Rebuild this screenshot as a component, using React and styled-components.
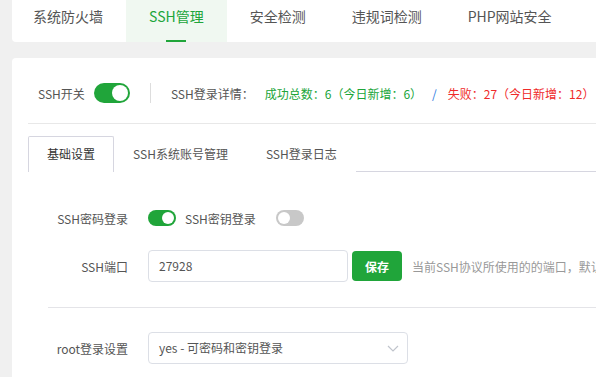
import React from 'react'
import styled, { createGlobalStyle } from 'styled-components'

const GlobalStyle = createGlobalStyle`
  html, body {
    margin: 0;
    padding: 0;
    overflow: hidden;
    background: #f0f0f0;
  }
  body {
    font-family: "Noto Sans CJK SC", "Noto Sans", "Liberation Sans", sans-serif;
    font-size: 12px;
    color: #555;
  }
`

const green = '#20a53a'

const Page = styled.div`
  width: 640px;
  height: 377px;
  padding-left: 12px;
  overflow: hidden;
`

const TopCard = styled.div`
  background: #fff;
  border-radius: 0 0 4px 4px;
  height: 42px;
  display: flex;
`

const TopTab = styled.div`
  position: relative;
  height: 42px;
  line-height: 32px;
  padding: 0 23px;
  font-size: 14px;
  color: ${p => (p.$active ? green : '#555')};
  background: ${p => (p.$active ? '#f0f8f1' : 'transparent')};
  white-space: nowrap;

  &:first-child {
    padding-left: 21px;
  }

  &::after {
    content: '';
    display: ${p => (p.$active ? 'block' : 'none')};
    position: absolute;
    left: 50%;
    bottom: 0;
    width: 20px;
    height: 2px;
    margin-left: -10px;
    background: ${green};
  }
`

const MainCard = styled.div`
  margin-top: 16px;
  background: #fff;
  border-radius: 4px;
  padding: 16px;
  height: 400px;
`

const StatusRow = styled.div`
  display: flex;
  align-items: center;
  height: 38px;
  padding: 0 10px 11px;
  border-bottom: 1px solid #e8e8e8;
  white-space: nowrap;
`

const Label = styled.span`
  color: #555;
  margin-left: ${p => p.$ml || 0}px;
`

const Switch = styled.span`
  position: relative;
  display: inline-block;
  flex: none;
  width: ${p => (p.$big ? 36 : 28)}px;
  height: ${p => (p.$big ? 20 : 16)}px;
  border-radius: 10px;
  background: ${p => (p.$on ? green : '#c8c8c8')};
  margin-left: ${p => p.$ml || 0}px;

  &::after {
    content: '';
    position: absolute;
    top: 2px;
    left: ${p => (p.$on ? 'auto' : '2px')};
    right: ${p => (p.$on ? '2px' : 'auto')};
    width: ${p => (p.$big ? 16 : 12)}px;
    height: ${p => (p.$big ? 16 : 12)}px;
    border-radius: 50%;
    background: #fff;
  }
`

const VLine = styled.span`
  width: 1px;
  height: 20px;
  background: #ddd;
  margin: 0 20px;
`

const Stat = styled.span`
  color: ${p => p.$color};
  margin-left: ${p => p.$ml || 0}px;
`

const Slash = styled.span`
  color: #2b7ae0;
  margin: 0 11px 0 10px;
`

const SubTabs = styled.div`
  display: flex;
  margin-top: 12px;
  height: 35px;
  border-bottom: 1px solid #d6d6e0;
`

const SubTab = styled.div`
  box-sizing: border-box;
  height: 36px;
  line-height: 34px;
  padding: 0 18px;
  color: ${p => (p.$active ? '#333' : '#555')};
  background: #fff;
  border: 1px solid ${p => (p.$active ? '#d6d6e0' : 'transparent')};
  border-bottom: none;
  border-radius: 2px 2px 0 0;
  white-space: nowrap;
`

const Form = styled.div`
  padding: 30px 0 0 20px;
`

const Row = styled.div`
  display: flex;
  align-items: center;
  height: 32px;
  margin-bottom: 16px;
  white-space: nowrap;
`

const RowLabel = styled.div`
  width: 80px;
  padding-right: 20px;
  text-align: right;
  color: #555;
`

const Input = styled.div`
  box-sizing: border-box;
  width: ${p => p.$w}px;
  height: 32px;
  border: 1px solid #dcdfe6;
  border-radius: 4px;
  padding: 0 10px;
  line-height: 30px;
  color: #555;
  position: relative;
`

const Button = styled.button`
  width: 50px;
  height: 30px;
  margin-left: 4px;
  border: none;
  border-radius: 4px;
  background: ${green};
  color: #fff;
  font-family: inherit;
  font-size: 12px;
  font-weight: bold;
`

const Hint = styled.span`
  margin-left: 10px;
  color: #999;
`

const Divider = styled.div`
  border-top: 1px solid #e4e4e8;
  margin: 25px 0 24px;
`

const Chevron = styled.svg`
  position: absolute;
  right: 8px;
  top: 12px;
`

export default function App() {
  return (
    <Page>
      <GlobalStyle />
      <TopCard>
        <TopTab>系统防火墙</TopTab>
        <TopTab $active>SSH管理</TopTab>
        <TopTab>安全检测</TopTab>
        <TopTab>违规词检测</TopTab>
        <TopTab>PHP网站安全</TopTab>
      </TopCard>
      <MainCard>
        <StatusRow>
          <Label>SSH开关</Label>
          <Switch $big $on $ml={9} />
          <VLine />
          <Label>SSH登录详情：</Label>
          <Stat $color={green} $ml={11}>成功总数：6（今日新增：6）</Stat>
          <Slash>/</Slash>
          <Stat $color="#ef2a2a">失败：27（今日新增：12）</Stat>
        </StatusRow>
        <SubTabs>
          <SubTab $active>基础设置</SubTab>
          <SubTab>SSH系统账号管理</SubTab>
          <SubTab>SSH登录日志</SubTab>
        </SubTabs>
        <Form>
          <Row>
            <RowLabel>SSH密码登录</RowLabel>
            <Switch $on />
            <Label $ml={9}>SSH密钥登录</Label>
            <Switch $ml={20} />
          </Row>
          <Row>
            <RowLabel>SSH端口</RowLabel>
            <Input $w={200}>27928</Input>
            <Button>保存</Button>
            <Hint>当前SSH协议所使用的的端口，默认为22</Hint>
          </Row>
          <Divider />
          <Row>
            <RowLabel>root登录设置</RowLabel>
            <Input $w={260}>
              yes - 可密码和密钥登录
              <Chevron width="12" height="7" viewBox="0 0 12 7">
                <polyline points="1,1 6,6 11,1" fill="none" stroke="#c0c4cc" strokeWidth="1.2" />
              </Chevron>
            </Input>
          </Row>
        </Form>
      </MainCard>
    </Page>
  )
}
